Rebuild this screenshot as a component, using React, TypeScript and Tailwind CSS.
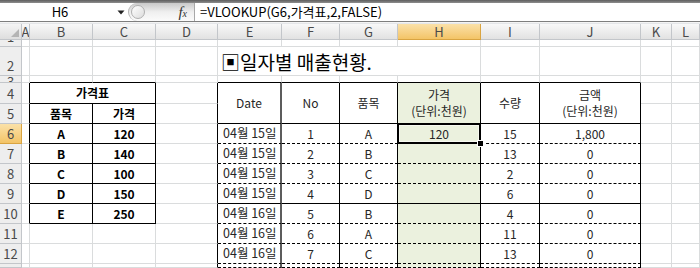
import React from 'react'
import clsx from 'clsx'
import { twMerge } from 'tailwind-merge'

const cn = (...a: Parameters<typeof clsx>) => twMerge(clsx(...a))

// base cell styles
const GRID = 'border-r border-b border-[#dadcdd]'
const GRID_RB = 'border-r border-b border-[#dadcdd] border-r-black'
const GRID_BB = 'border-r border-b border-[#dadcdd] border-b-black'
const COLHEAD =
  'border-r border-b border-[#c3c6ca] bg-linear-to-b from-[#f8f8f8] to-[#e2e2e2] text-[#4a4a4a] text-[13px] leading-[15px]'
const COLHEAD_HI =
  'border-r border-b border-[#d9a441] bg-linear-to-b from-[#fbe1a8] to-[#f3c466] text-[#4a4a4a] text-[13px] leading-[15px]'
const ROWHEAD =
  'border-r border-b border-[#c3c6ca] bg-[#eeeeee] text-[#4a4a4a] text-[13px] items-end pb-[1px] leading-4'
const ROWHEAD_HI =
  'border-r border-b border-[#d9a441] bg-linear-to-b from-[#fbe1a8] to-[#f3c466] text-[#4a4a4a] text-[13px] items-end pb-[1px] leading-4'
const LT = 'border-r border-b border-black font-bold text-black'
const RT = 'border-r border-b border-black text-[#262626]'
const RT_DASH = 'border-r border-b border-black [border-bottom-style:dashed] text-[#262626]'
const E_COL = 'border-r-2 border-r-[#5c5c5c] justify-start pl-[5px] text-[12.5px]'
const GREEN = 'bg-[#ebf1de]'

function Cell({ className, children }: { className?: string; children?: React.ReactNode }) {
  return (
    <div className={cn('flex items-center justify-center overflow-hidden whitespace-nowrap', className)}>
      {children}
    </div>
  )
}

type DataRow = {
  n: number
  left?: [string, string]
  date: string
  no: string
  item: string
  price?: string
  qty: string
  amount: string
  solid?: boolean
}

const rows: DataRow[] = [
  { n: 6, left: ['A', '120'], date: '04월 15일', no: '1', item: 'A', price: '120', qty: '15', amount: '1,800' },
  { n: 7, left: ['B', '140'], date: '04월 15일', no: '2', item: 'B', qty: '13', amount: '0' },
  { n: 8, left: ['C', '100'], date: '04월 15일', no: '3', item: 'C', qty: '2', amount: '0' },
  { n: 9, left: ['D', '150'], date: '04월 15일', no: '4', item: 'D', qty: '6', amount: '0', solid: true },
  { n: 10, left: ['E', '250'], date: '04월 16일', no: '5', item: 'B', qty: '4', amount: '0' },
  { n: 11, date: '04월 16일', no: '6', item: 'A', qty: '11', amount: '0' },
  { n: 12, date: '04월 16일', no: '7', item: 'C', qty: '13', amount: '0' },
]

function SheetRow({ r }: { r: DataRow }) {
  const line = r.solid ? RT : RT_DASH
  const selected = r.n === 6
  return (
    <>
      <Cell className={selected ? ROWHEAD_HI : ROWHEAD}>{r.n}</Cell>
      <Cell className={r.left ? GRID_RB : GRID} />
      {r.left ? (
        <>
          <Cell className={LT}>{r.left[0]}</Cell>
          <Cell className={LT}>{r.left[1]}</Cell>
        </>
      ) : (
        <>
          <Cell className={GRID} />
          <Cell className={GRID} />
        </>
      )}
      <Cell className={GRID_RB} />
      <Cell className={cn(line, E_COL)}>{r.date}</Cell>
      <Cell className={line}>{r.no}</Cell>
      <Cell className={line}>{r.item}</Cell>
      {selected ? (
        <div className={cn('relative z-10 flex items-center justify-center', line, GREEN)}>
          {r.price}
          <div className="absolute -left-[1px] -top-[1px] -right-[1px] -bottom-[1px] border-2 border-black" />
          <div className="absolute left-[1px] top-[1px] right-[1px] bottom-[1px] border border-[#f6f8f0]" />
          <div className="absolute -right-[4px] -bottom-[4px] w-[7px] h-[7px] bg-black border border-white" />
        </div>
      ) : (
        <Cell className={cn(line, GREEN)}>{r.price}</Cell>
      )}
      <Cell className={line}>{r.qty}</Cell>
      <Cell className={line}>{r.amount}</Cell>
      <Cell className={GRID} />
      <Cell className={GRID} />
    </>
  )
}

function FormulaBar() {
  return (
    <div className="h-[24px] bg-[#e4e6e9]">
      <div className="h-[3px] bg-linear-to-b from-[#5e5e5e] to-[#8e8e8e]" />
      <div className="h-[19px] flex items-center bg-white border-b border-[#7e7e7e] text-[13px] text-black">
        <div className="w-[116px] text-center pl-[4px]">H6</div>
        <svg width="10" height="10" viewBox="0 0 10 10" className="mr-[2px]">
          <path d="M1.5 3.5h7L5 7.5z" fill="#222" />
        </svg>
        <div className="relative h-[18px] w-[66px] rounded-l-full bg-linear-to-b from-[#c9c9c9] via-[#efefef] to-[#fbfbfb] border-l border-[#b5b5b5] flex items-center">
          <div className="ml-[2px] w-[14px] h-[14px] rounded-full border border-[#b0b0b0] bg-linear-to-br from-white to-[#dcdcdc]" />
          <div className="ml-auto mr-[7px] font-['Liberation_Serif',serif] italic text-[15px] leading-none text-[#333]">
            f<span className="text-[10px]">x</span>
          </div>
        </div>
        <div className="h-full border-l border-[#a8a8a8] pl-[5px] flex items-center">
          =VLOOKUP(G6,가격표,2,FALSE)
        </div>
      </div>
      <div className="h-[1px] bg-[#f4f4f4]" />
    </div>
  )
}

export default function App() {
  return (
    <div className="w-[700px] h-[268px] overflow-hidden bg-white font-['Noto_Sans_CJK_KR','Noto_Sans',sans-serif] text-[12px]">
      <FormulaBar />
      <div className="grid grid-cols-[22px_8px_63px_63px_62px_64px_58px_58px_83px_59px_101px_31px_28px] grid-rows-[16px_7px_29px_7px_21px_20px_20px_20px_20px_20px_20px_20px_20px_4px]">
        {/* column headers */}
        <div className="relative border-r border-b border-[#c3c6ca] bg-linear-to-b from-[#f4f4f4] to-[#dedede]">
          <svg width="8" height="8" viewBox="0 0 8 8" className="absolute right-[2px] bottom-[2px]">
            <path d="M8 0V8H0z" fill="#b4b4b4" />
          </svg>
        </div>
        <Cell className={COLHEAD}>A</Cell>
        <Cell className={COLHEAD}>B</Cell>
        <Cell className={COLHEAD}>C</Cell>
        <Cell className={COLHEAD}>D</Cell>
        <Cell className={COLHEAD}>E</Cell>
        <Cell className={COLHEAD}>F</Cell>
        <Cell className={COLHEAD}>G</Cell>
        <Cell className={COLHEAD_HI}>H</Cell>
        <Cell className={COLHEAD}>I</Cell>
        <Cell className={COLHEAD}>J</Cell>
        <Cell className={COLHEAD}>K</Cell>
        <Cell className={COLHEAD}>L</Cell>

        {/* row 1 */}
        <Cell className={ROWHEAD}>1</Cell>
        <Cell className={GRID} />
        <Cell className={GRID} />
        <Cell className={GRID} />
        <Cell className={GRID} />
        <Cell className={GRID} />
        <Cell className={GRID} />
        <Cell className={GRID} />
        <Cell className={GRID} />
        <Cell className={GRID} />
        <Cell className={GRID} />
        <Cell className={GRID} />
        <Cell className={GRID} />

        {/* row 2 - title */}
        <Cell className={ROWHEAD}>2</Cell>
        <Cell className={GRID} />
        <Cell className={GRID} />
        <Cell className={GRID} />
        <Cell className={GRID} />
        <Cell className={cn(GRID, 'col-span-4 justify-start items-end pl-[3px] text-[19px] leading-[26px] text-black')}>
          ▣일자별 매출현황.
        </Cell>
        <Cell className={GRID} />
        <Cell className={GRID} />
        <Cell className={GRID} />
        <Cell className={GRID} />

        {/* row 3 */}
        <Cell className={cn(ROWHEAD, 'items-start pb-0 leading-[10px] pt-[1px]')}>3</Cell>
        <Cell className={GRID} />
        <Cell className={GRID_BB} />
        <Cell className={GRID_BB} />
        <Cell className={GRID} />
        <Cell className={GRID_BB} />
        <Cell className={GRID_BB} />
        <Cell className={GRID_BB} />
        <Cell className={GRID_BB} />
        <Cell className={GRID_BB} />
        <Cell className={GRID_BB} />
        <Cell className={GRID} />
        <Cell className={GRID} />

        {/* row 4 - table headers */}
        <Cell className={ROWHEAD}>4</Cell>
        <Cell className={GRID_RB} />
        <Cell className={cn(LT, 'col-span-2')}>가격표</Cell>
        <Cell className={GRID_RB} />
        <Cell className={cn(RT, E_COL, 'row-span-2 justify-center pl-0 text-[12px]')}>Date</Cell>
        <Cell className={cn(RT, 'row-span-2')}>No</Cell>
        <Cell className={cn(RT, 'row-span-2')}>품목</Cell>
        <Cell className={cn(RT, GREEN, 'row-span-2 flex-col leading-[16px]')}>
          <span>가격</span>
          <span>(단위:천원)</span>
        </Cell>
        <Cell className={cn(RT, 'row-span-2')}>수량</Cell>
        <Cell className={cn(RT, 'row-span-2 flex-col leading-[16px]')}>
          <span>금액</span>
          <span>(단위:천원)</span>
        </Cell>
        <Cell className={GRID} />
        <Cell className={GRID} />

        {/* row 5 */}
        <Cell className={ROWHEAD}>5</Cell>
        <Cell className={GRID_RB} />
        <Cell className={LT}>품목</Cell>
        <Cell className={LT}>가격</Cell>
        <Cell className={GRID_RB} />
        <Cell className={GRID} />
        <Cell className={GRID} />

        {rows.map((r) => (
          <SheetRow key={r.n} r={r} />
        ))}

        {/* row 13, cut off at the window edge */}
        <Cell className={cn(ROWHEAD, 'items-start pb-0')} />
        <Cell className={GRID} />
        <Cell className={GRID} />
        <Cell className={GRID} />
        <Cell className={GRID_RB} />
        <Cell className={cn(RT_DASH, E_COL)} />
        <Cell className={RT_DASH} />
        <Cell className={RT_DASH} />
        <Cell className={cn(RT_DASH, GREEN)} />
        <Cell className={RT_DASH} />
        <Cell className={RT_DASH} />
        <Cell className={GRID} />
        <Cell className={GRID} />
      </div>
    </div>
  )
}
